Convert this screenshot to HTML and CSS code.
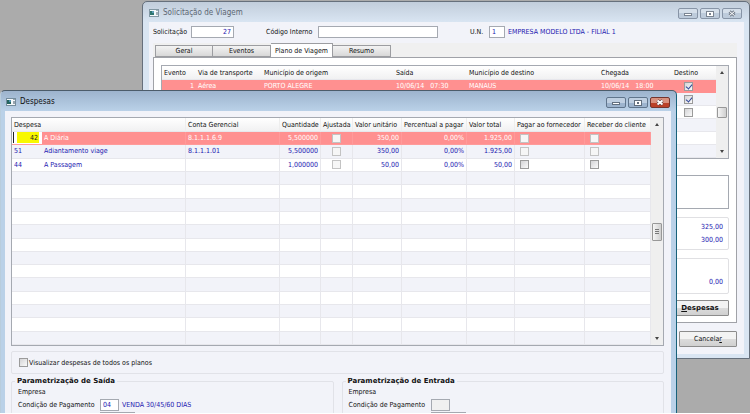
FILE: index.html
```html
<!DOCTYPE html>
<html lang="pt-BR">
<head>
<meta charset="utf-8">
<title>Solicitação de Viagem</title>
<link rel="stylesheet" href="styles.css">
</head>
<body>
<main class="desktop">
  <section class="window window-back">
    <header class="titlebar">
      <svg class="app-icon" viewBox="0 0 10 8"><rect x=".5" y=".5" width="9" height="7" fill="#f4f8fa" stroke="#8297a3"/><rect x="1" y="2" width="4" height="4" fill="#2f756e"/><rect x="3" y="2" width="2" height="2" fill="#5e9eb8"/><path d="M8 1v1M8 3v3" stroke="#526878"/></svg>
      <h1>Solicitação de Viagem</h1>
      <div class="controls">
        <button aria-label="Minimizar"><svg viewBox="0 0 20 11"><rect x="6.500" y="5.500" width="7" height="2" fill="#fff" stroke="#7b8592"/></svg></button>
        <button aria-label="Maximizar"><svg viewBox="0 0 20 11"><rect x="6.500" y="3.500" width="7" height="5" fill="#fff" stroke="#7b8592"/><path d="M9 6h2" stroke="#7b8592" stroke-width="2"/></svg></button>
        <button aria-label="Fechar"><svg viewBox="0 0 20 11"><path d="M7.500 3.500l5 4M12.500 3.500l-5 4" stroke="#7b8592" stroke-width="3"/><path d="M7.500 3.500l5 4M12.500 3.500l-5 4" stroke="#fff"/></svg></button>
      </div>
    </header>
    <div class="client">
      <div class="request">
        <label for="sol" class="sol-label">Solicitação</label><input id="sol" class="field sol" value="27">
        <label for="cod" class="cod-label">Código Interno</label><input id="cod" class="field cod">
        <label for="un" class="un-label">U.N.</label><input id="un" class="field un" value="1">
        <span class="value">EMPRESA MODELO LTDA - FILIAL 1</span>
      </div>
      <nav class="tabs">
        <button>Geral</button><button>Eventos</button><button class="active">Plano de Viagem</button><button>Resumo</button>
      </nav>
      <div class="panel">
        <div class="grid trips">
          <table>
            <colgroup><col class="t1"><col class="t2"><col class="t3"><col class="t4"><col class="t3"><col class="t4"><col></colgroup>
            <thead><tr><th>Evento</th><th>Via de transporte</th><th>Município de origem</th><th>Saída</th><th>Município de destino</th><th>Chegada</th><th>Destino</th></tr></thead>
            <tbody>
              <tr class="selected"><td class="num">1</td><td>Aérea</td><td>PORTO ALEGRE</td><td>10/06/14 &nbsp; 07:30</td><td>MANAUS</td><td>10/06/14 &nbsp; 18:00</td><td class="mid"><input type="checkbox" checked aria-label="Destino 1"></td></tr>
              <tr><td></td><td></td><td></td><td></td><td></td><td></td><td class="mid"><input type="checkbox" checked aria-label="Destino 2"></td></tr>
              <tr><td></td><td></td><td></td><td></td><td></td><td></td><td class="mid"><input type="checkbox" aria-label="Destino 3"></td></tr>
              <tr><td></td><td></td><td></td><td></td><td></td><td></td><td></td></tr>
              <tr><td></td><td></td><td></td><td></td><td></td><td></td><td></td></tr>
              <tr><td></td><td></td><td></td><td></td><td></td><td></td><td></td></tr>
            </tbody>
          </table>
          <div class="scroll"><i class="up"></i><i class="thumb short"></i><i class="down"></i></div>
        </div>
        <div class="note"></div>
        <div class="totals"><span>325,00</span><span>300,00</span></div>
        <div class="totals balance"><span>0,00</span></div>
        <button class="button expenses"><u>D</u>espesas</button>
      </div>
      <div class="footer"><button class="button">Cancela<u>r</u></button></div>
    </div>
  </section>

  <section class="window window-front">
    <header class="titlebar">
      <svg class="app-icon" viewBox="0 0 10 8"><rect x=".5" y=".5" width="9" height="7" fill="#f4f8fa" stroke="#748c9c"/><rect x="1" y="2" width="4" height="4" fill="#23645f"/><rect x="3" y="2" width="2" height="2" fill="#4c91b0"/><path d="M8 1v1M8 3v3" stroke="#3c5365"/></svg>
      <h1>Despesas</h1>
      <div class="controls">
        <button aria-label="Minimizar"><svg viewBox="0 0 20 11"><rect x="6.500" y="5.500" width="7" height="2" fill="#fff" stroke="#626f7e"/></svg></button>
        <button aria-label="Maximizar"><svg viewBox="0 0 20 11"><rect x="6.500" y="3.500" width="7" height="5" fill="#fff" stroke="#626f7e"/><path d="M9 6h2" stroke="#626f7e" stroke-width="2"/></svg></button>
        <button class="close" aria-label="Fechar"><svg viewBox="0 0 20 11"><path d="M7.500 3.500l5 4M12.500 3.500l-5 4" stroke="#5b3a3c" stroke-width="3"/><path d="M7.500 3.500l5 4M12.500 3.500l-5 4" stroke="#fff" stroke-width="2"/></svg></button>
      </div>
    </header>
    <div class="client">
      <div class="grid expenses-grid">
        <table>
          <colgroup><col class="e1"><col class="e2"><col class="e3"><col class="e4"><col class="e5"><col class="e6"><col class="e7"><col class="e8"><col class="e9"><col></colgroup>
          <thead><tr><th colspan="2">Despesa</th><th>Conta Gerencial</th><th>Quantidade</th><th>Ajustada</th><th>Valor unitário</th><th>Percentual a pagar</th><th>Valor total</th><th>Pagar ao fornecedor</th><th>Receber do cliente</th></tr></thead>
          <tbody id="rows">
            <tr class="selected"><td class="editing"><input value="42" aria-label="Despesa"></td><td>A Diária</td><td>8.1.1.1.6.9</td><td class="num">5,500000</td><td class="mid"><input type="checkbox" disabled aria-label="Ajustada"></td><td class="num">350,00</td><td class="num">0,00%</td><td class="num">1.925,00</td><td class="box"><input type="checkbox" disabled aria-label="Pagar ao fornecedor"></td><td class="box"><input type="checkbox" disabled aria-label="Receber do cliente"></td></tr>
            <tr><td>51</td><td>Adiantamento viage</td><td>8.1.1.1.01</td><td class="num">5,500000</td><td class="mid"><input type="checkbox" disabled aria-label="Ajustada"></td><td class="num">350,00</td><td class="num">0,00%</td><td class="num">1.925,00</td><td class="box"><input type="checkbox" disabled aria-label="Pagar ao fornecedor"></td><td class="box"><input type="checkbox" disabled aria-label="Receber do cliente"></td></tr>
            <tr><td>44</td><td>A Passagem</td><td></td><td class="num">1,000000</td><td class="mid"><input type="checkbox" disabled aria-label="Ajustada"></td><td class="num">50,00</td><td class="num">0,00%</td><td class="num">50,00</td><td class="box"><input type="checkbox" aria-label="Pagar ao fornecedor"></td><td class="box"><input type="checkbox" aria-label="Receber do cliente"></td></tr>
          </tbody>
        </table>
        <div class="scroll"><i class="up"></i><i class="thumb"></i><i class="down"></i></div>
      </div>
      <div class="group option"><input type="checkbox" id="all"><label for="all">Visualizar despesas de todos os planos</label></div>
      <div class="params">
        <fieldset class="group">
          <legend>Parametrização de Saída</legend>
          <p>Empresa</p>
          <div class="line"><label for="out">Condição de Pagamento</label><input id="out" class="field small" value="04"><span class="value">VENDA 30/45/60 DIAS</span></div>
          <div class="line"><label for="out2"></label><input id="out2" class="field next" disabled></div>
        </fieldset>
        <fieldset class="group">
          <legend>Parametrização de Entrada</legend>
          <p>Empresa</p>
          <div class="line"><label for="in">Condição de Pagamento</label><input id="in" class="field small" disabled></div>
          <div class="line"><label for="in2"></label><input id="in2" class="field next" disabled></div>
        </fieldset>
      </div>
    </div>
  </section>
</main>
<script src="rows.js"></script>
</body>
</html>
```
FILE: styles.css
```css
* { box-sizing: border-box; }
body { margin: 0; background: #fff; color: #111; font: 7px/12px "DejaVu Sans Condensed", sans-serif; }
button, input { font: inherit; color: inherit; margin: 0; padding: 0; border-radius: 0; }
h1, p { margin: 0; font-size: inherit; font-weight: normal; }
i { display: block; }

.desktop { position: relative; height: calc(100vh - 1px); overflow: hidden; background: #ababab; }
.window { position: absolute; border: 1px solid #66707c; border-radius: 5px 5px 0 0; }
.window-back { top: 1px; left: 142px; right: 0; padding: 0 5px 4px 6px; background: linear-gradient(#c1cddb, #d9e5f2 20px); }
.window-front { top: 90px; left: 0; right: 73px; bottom: 0; padding: 0 5px 0 4px; border-color: #4c5c6a #17617a #17617a #b9cddd; border-bottom: 0; background: linear-gradient(#9db3cd, #bad1e8 20px); }
.titlebar { display: flex; align-items: center; height: 20px; padding-top: 2px; }
.window-back h1 { color: #5c6773; }
h1 { flex: 1; font-size: 8px; }
.app-icon { width: 10px; height: 8px; margin-right: 4px; }
.window-front .app-icon { margin-left: 1px; }
.controls { display: flex; gap: 2px; padding-right: 2px; }
.controls button { display: flex; width: 20px; height: 11px; border: 1px solid #8794a6; border-radius: 2px; background: linear-gradient(#d5dfea 50%, #bdcbdb 50%); }
.controls svg { display: block; flex: none; width: 20px; height: 11px; margin: -1px; }
.window-front .controls { gap: 2px; padding-right: 1px; }
.window-front .controls button { border-color: #60758c; background: linear-gradient(#bfcfe1 50%, #9db4ce 50%); }
.window-front .controls .close { border-color: #74352e; background: linear-gradient(#d9917f 50%, #bb4129 50%); }
.client { background: #f2f3f9; }
.window-back .client { padding: 4px 7px 7px 4px; }
.window-front .client { height: 100%; padding: 6px 7px 0 6px; }

.field { height: 12px; border: 1px solid #a5a9b1; background: #fff; color: #1d18b0; padding: 0 2px; }
.field:disabled { background: #f0f0f0; }
.value { color: #1d18b0; white-space: nowrap; }
.request { display: flex; align-items: center; height: 12px; white-space: nowrap; }
.sol-label { width: 38px; }
.sol { width: 43px; text-align: right; }
.cod-label { width: 52px; margin-left: 32px; }
.cod { width: 120px; }
.un-label { width: 19px; margin-left: 32px; }
.un { width: 16px; margin-right: 3px; }

.tabs { display: flex; align-items: flex-end; height: 14px; margin-top: 5px; padding-left: 2px; background: #f0f0f0; }
.tabs button { width: 58px; height: 12px; border: 1px solid #9c9da1; border-left-width: 0; background: linear-gradient(#f3f3f3, #d8d8d8); line-height: 10px; white-space: nowrap; }
.tabs button:first-child { border-left-width: 1px; }
.tabs .active { width: 62px; height: 14px; background: #fff; border-bottom: 0; }
.panel { display: flex; flex-direction: column; border: 1px solid #a0a2a8; background: #fff; padding: 7px 7px 6px; }

.grid { display: flex; border: 1px solid #a5a9b1; background: #f2f3f9; }
table { flex: 1; width: 100%; border-collapse: separate; border-spacing: 0; table-layout: fixed; }
th, td { padding: 0 2px; height: 13px; line-height: 12px; font-weight: normal; text-align: left; white-space: nowrap; overflow: hidden; border-bottom: 1px solid #e7e7ec; }
th { height: 14px; background: linear-gradient(#fff, #f1f1f2); }
tbody tr { background: #fff; color: #1d18b0; }
tbody tr:nth-child(even) { background: #f2f3f9; }
tbody tr.selected { background: #ff9090; color: #fff; }
.selected td { border-color: #ff9090; }
td.num { text-align: right; }
td.mid { text-align: center; }
td.box { padding-left: 5px; }
.trips td.mid { padding-right: 14px; }
.t1 { width: 34px; } .t2 { width: 66px; } .t3 { width: 132px; } .t4 { width: 73px; }
.expenses-grid table { height: 227px; }
.expenses-grid td { border-right: 1px solid #e7e7ec; }
.expenses-grid .selected td { border-color: #ff9a9a; }
.expenses-grid td:first-child { border-right: 0; }
.expenses-grid th { border-right: 1px solid #eee; }
.expenses-grid th:nth-child(n+3) { padding-right: 0; }
.e1 { width: 30px; } .e2 { width: 144px; } .e3 { width: 94px; } .e4 { width: 41px; } .e5 { width: 32px; } .e6 { width: 49px; } .e7 { width: 65px; } .e8 { width: 48px; } .e9 { width: 70px; }
.expenses-grid td.editing { padding: 0 3px 1px 1px; background: #fff; }
.editing input { display: block; width: 100%; height: 11px; border: 0; border-left: 1px solid #222; padding-right: 1px; background: linear-gradient(90deg, #fff 3px, #f8f800 3px); color: #222; text-align: right; }

input[type="checkbox"] { appearance: none; display: inline-block; position: relative; width: 9px; height: 9px; border: 1px solid #9b9b9b; background: linear-gradient(135deg, #d4d4d6, #fafafa); vertical-align: middle; }
input[type="checkbox"]:disabled { border-color: #c3c3c3; background: #f6f6f6; }
input[type="checkbox"]:checked::after { content: ""; position: absolute; left: 2px; top: 0; width: 3px; height: 5px; border: solid #31479a; border-width: 0 1px 1px 0; transform: rotate(40deg); }

.scroll { display: flex; flex-direction: column; align-items: center; justify-content: space-between; width: 12px; padding: 5px 0; background: #efefef; }
.up, .down { border: 2px solid transparent; }
.up { border-bottom: 3px solid #444; border-top: 0; }
.down { border-top: 3px solid #444; border-bottom: 0; }
.thumb { width: 10px; height: 18px; border: 1px solid #989898; border-radius: 1px; background: repeating-linear-gradient(#777 0 1px, transparent 1px 2px) center / 4px 5px no-repeat, linear-gradient(90deg, #f5f5f5, #cfcfcf); }
.thumb.short { height: 11px; background: linear-gradient(90deg, #f5f5f5, #cfcfcf); }

.note { height: 34px; margin-top: 16px; border: 1px solid #a5a9b1; }
.totals { display: flex; flex-direction: column; align-items: flex-end; justify-content: center; height: 33px; margin-top: 8px; padding-right: 5px; border: 1px solid #e0e0e3; border-radius: 2px; color: #1d18b0; line-height: 13px; }
.balance { height: 36px; justify-content: flex-end; padding-bottom: 4px; }
.button { width: 58px; height: 16px; border: 1px solid #8c8c8c; border-radius: 1px; background: linear-gradient(#f3f3f3 50%, #dcdcdc 50%, #d0d0d0); }
.expenses { align-self: flex-end; margin-top: 6px; font: bold 7px "DejaVu Sans", sans-serif; }
.footer { display: flex; justify-content: flex-end; padding-top: 8px; }

.group { border: 1px solid #e1e2e8; border-radius: 2px; }
.option { display: flex; align-items: center; gap: 1px; height: 23px; margin-top: 5px; padding-left: 7px; }
.params { display: grid; grid-template-columns: 1fr 1fr; gap: 8px; margin-top: 1px; }
fieldset { min-width: 0; margin: 0; padding: 0 6px; }
legend { margin-left: -3px; padding: 0 2px; font: bold 7px/12px "DejaVu Sans", sans-serif; color: #111; }
.line { display: flex; align-items: center; height: 13px; }
.params p { line-height: 10px; height: 11px; }
.line label { width: 82px; white-space: nowrap; }
.small { width: 19px; margin-right: 3px; }
.next { width: 35px; }
```
FILE: rows.js
```js
// Fill the expenses grid with blank rows up to its visible capacity.
const rows = document.getElementById("rows");
while (rows.children.length < 16) {
  const row = rows.insertRow();
  for (let i = 0; i < 10; i++) row.insertCell();
}
```
